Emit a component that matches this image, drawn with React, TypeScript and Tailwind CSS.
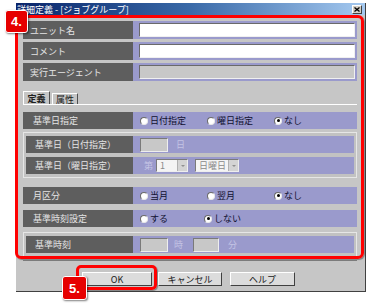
import React from "react";

const jp = "font-['Noto_Sans_CJK_JP','Noto_Sans',sans-serif]";

function Radio({ checked }: { checked?: boolean }) {
  return (
    <span className="flex items-center justify-center w-[8px] h-[8px] rounded-full bg-white border border-t-[#6a6a6a] border-l-[#6a6a6a] border-r-[#e8e8e8] border-b-[#e8e8e8]">
      {checked && <span className="w-[3px] h-[3px] rounded-full bg-black" />}
    </span>
  );
}

function RadioItem({ label, checked }: { label: string; checked?: boolean }) {
  return (
    <div className="flex items-center w-[67px] gap-[2px]">
      <Radio checked={checked} />
      <span className="text-[9px] leading-none text-[#101030]">{label}</span>
    </div>
  );
}

function Box({ w }: { w: string }) {
  return (
    <div
      className={`${w} h-[14px] bg-[#c8c8c8] border border-t-[#7a7a7a] border-l-[#7a7a7a] border-r-[#eeeeee] border-b-[#eeeeee]`}
    />
  );
}

function Select({ w, value }: { w: string; value: string }) {
  return (
    <div
      className={`${w} h-[13px] flex bg-[#f4f4f4] border border-t-[#7a7a7a] border-l-[#7a7a7a] border-r-[#eeeeee] border-b-[#eeeeee]`}
    >
      <span className="flex-1 pl-[3px] text-[9px] leading-[11px] text-[#8a8a8a]">{value}</span>
      <span className="w-[10px] bg-[#d4d4d4] border-l border-[#b0b0b0] flex items-center justify-center">
        <span className="w-0 h-0 border-l-[2px] border-r-[2px] border-t-[2px] border-l-transparent border-r-transparent border-t-[#909090]" />
      </span>
    </div>
  );
}

function TopRow({ label, disabled }: { label: string; disabled?: boolean }) {
  return (
    <div className="flex h-[18px] bg-[#9a9acc]">
      <div className="w-[110px] bg-[#5e5e5e] flex items-center pl-[7px] text-[9px] leading-none text-[#e4e4e4]">
        {label}
      </div>
      <div className="flex-1 pl-[6px] pr-[2px] py-[2px]">
        <div
          className={`h-full border border-t-[#6a6a6a] border-l-[#6a6a6a] border-r-[#f0f0f0] border-b-[#f0f0f0] ${disabled ? "bg-[#c8c8c8]" : "bg-white"}`}
        />
      </div>
    </div>
  );
}

function PanelRow({
  label,
  inner,
  children,
}: {
  label: string;
  inner?: boolean;
  children: React.ReactNode;
}) {
  return (
    <div className="flex h-[17px] bg-[#9a9acc]">
      <div
        className={`${inner ? "w-[107px] pl-[9px]" : "w-[110px] pl-[10px]"} bg-[#5e5e5e] flex items-center text-[9px] leading-none text-[#e4e4e4]`}
      >
        {label}
      </div>
      <div className="flex-1 flex items-center pl-[7px]">{children}</div>
    </div>
  );
}

function Group({ children, className }: { children: React.ReactNode; className?: string }) {
  return (
    <div
      className={`border border-[#e6e6e6] bg-[#c2c2c2] px-[2px] py-[3px] flex flex-col gap-[4px] ${className ?? ""}`}
    >
      {children}
    </div>
  );
}

function Button({ label, w }: { label: string; w: string }) {
  return (
    <div
      className={`${w} h-[14px] flex items-center justify-center bg-[#dcdcdc] border border-t-white border-l-white border-r-[#404040] border-b-[#404040] text-[9px] leading-none text-[#202020]`}
    >
      {label}
    </div>
  );
}

const dim = "text-[9px] leading-none text-[#c4c4e4]";

export default function App() {
  return (
    <div className={`relative w-[369px] h-[305px] bg-white overflow-hidden ${jp}`}>
      <div className="ml-[16px] mt-[3px] w-[350px] h-[289px] bg-[#c6c6c6] border-r border-b border-[#404040] flex flex-col">
        {/* title bar */}
        <div className="h-[12px] bg-gradient-to-r from-[#0a246a] via-[#3a6aa8] to-[#a6caf0] flex items-center">
          <span className="ml-[1px] text-[9px] leading-none text-white whitespace-nowrap">
            詳細定義 - [ジョブグループ]
          </span>
          <div className="ml-auto mr-[3px] w-[10px] h-[9px] bg-[#d4d0c8] border border-t-white border-l-white border-r-[#404040] border-b-[#404040] flex items-center justify-center">
            <svg width="6" height="5" viewBox="0 0 6 5">
              <path d="M0.5 0.5 L5.5 4.5 M5.5 0.5 L0.5 4.5" stroke="#000" strokeWidth="1.3" />
            </svg>
          </div>
        </div>

        {/* body */}
        <div className="pl-[7px] pr-[8px] pt-[6px] flex flex-col">
          <div className="flex flex-col gap-[3px]">
            <TopRow label="ユニット名" />
            <TopRow label="コメント" />
            <TopRow label="実行エージェント" disabled />
          </div>

          {/* tabs */}
          <div className="mt-[10px] flex items-end h-[13px]">
            <div className="w-[27px] h-[13px] border-t border-l border-r border-t-white border-l-white border-r-[#505050] flex items-center justify-center text-[9px] leading-none font-bold text-[#202020]">
              定義
            </div>
            <div className="ml-[2px] w-[26px] h-[11px] border-t border-l border-r border-t-white border-l-white border-r-[#505050] flex items-center justify-center text-[9px] leading-none text-[#202020]">
              属性
            </div>
          </div>

          {/* panel */}
          <div className="border-t border-white border-b border-b-[#808080] pt-[7px] pb-[3px] flex flex-col">
            <PanelRow label="基準日指定">
              <RadioItem label="日付指定" />
              <RadioItem label="曜日指定" />
              <RadioItem label="なし" checked />
            </PanelRow>

            <Group className="mt-[3px]">
              <PanelRow label="基準日（日付指定）" inner>
                <div className="flex items-center">
                  <Box w="w-[28px]" />
                  <span className={`ml-[8px] ${dim}`}>日</span>
                </div>
              </PanelRow>
              <PanelRow label="基準日（曜日指定）" inner>
                <div className="flex items-center">
                  <span className={`ml-[4px] ${dim}`}>第</span>
                  <div className="ml-[3px]">
                    <Select w="w-[32px]" value="1" />
                  </div>
                  <div className="ml-[7px]">
                    <Select w="w-[44px]" value="日曜日" />
                  </div>
                </div>
              </PanelRow>
            </Group>

            <div className="mt-[9px]">
              <PanelRow label="月区分">
                <RadioItem label="当月" />
                <RadioItem label="翌月" />
                <RadioItem label="なし" checked />
              </PanelRow>
            </div>

            <div className="mt-[6px]">
              <PanelRow label="基準時刻設定">
                <RadioItem label="する" />
                <div className="ml-[-3px]">
                  <RadioItem label="しない" checked />
                </div>
              </PanelRow>
            </div>

            <Group className="mt-[5px]">
              <PanelRow label="基準時刻" inner>
                <div className="flex items-center">
                  <Box w="w-[28px]" />
                  <span className={`ml-[6px] ${dim}`}>時</span>
                  <div className="ml-[10px]">
                    <Box w="w-[26px]" />
                  </div>
                  <span className={`ml-[9px] ${dim}`}>分</span>
                </div>
              </PanelRow>
            </Group>
          </div>

          {/* buttons */}
          <div className="mt-[11px] ml-[59px] flex">
            <Button label="OK" w="w-[70px]" />
            <div className="ml-[6px]">
              <Button label="キャンセル" w="w-[64px]" />
            </div>
            <div className="ml-[8px]">
              <Button label="ヘルプ" w="w-[65px]" />
            </div>
          </div>
        </div>
      </div>

      {/* red highlight frames */}
      <div className="absolute left-[15px] top-[15px] w-[349px] h-[244px] border-[3px] border-[#ff0000] rounded-[6px] shadow-[1px_1px_1px_rgba(0,0,0,0.35)]" />
      <div className="absolute left-[76px] top-[265px] w-[81px] h-[25px] border-[3px] border-[#ff0000] rounded-[5px] shadow-[1px_1px_1px_rgba(0,0,0,0.35)]" />

      {/* badges */}
      <div className="absolute left-[5px] top-[10px] w-[23px] h-[23px] rounded-[3px] bg-[#e60000] border border-white shadow-[1px_1px_2px_rgba(0,0,0,0.5)] flex items-center justify-center font-['Liberation_Sans',sans-serif] font-bold text-[13px] leading-none text-white">
        4.
      </div>
      <div className="absolute left-[62px] top-[276px] w-[25px] h-[24px] rounded-[3px] bg-[#e60000] border border-white shadow-[1px_1px_2px_rgba(0,0,0,0.5)] flex items-center justify-center font-['Liberation_Sans',sans-serif] font-bold text-[13px] leading-none text-white">
        5.
      </div>
    </div>
  );
}
